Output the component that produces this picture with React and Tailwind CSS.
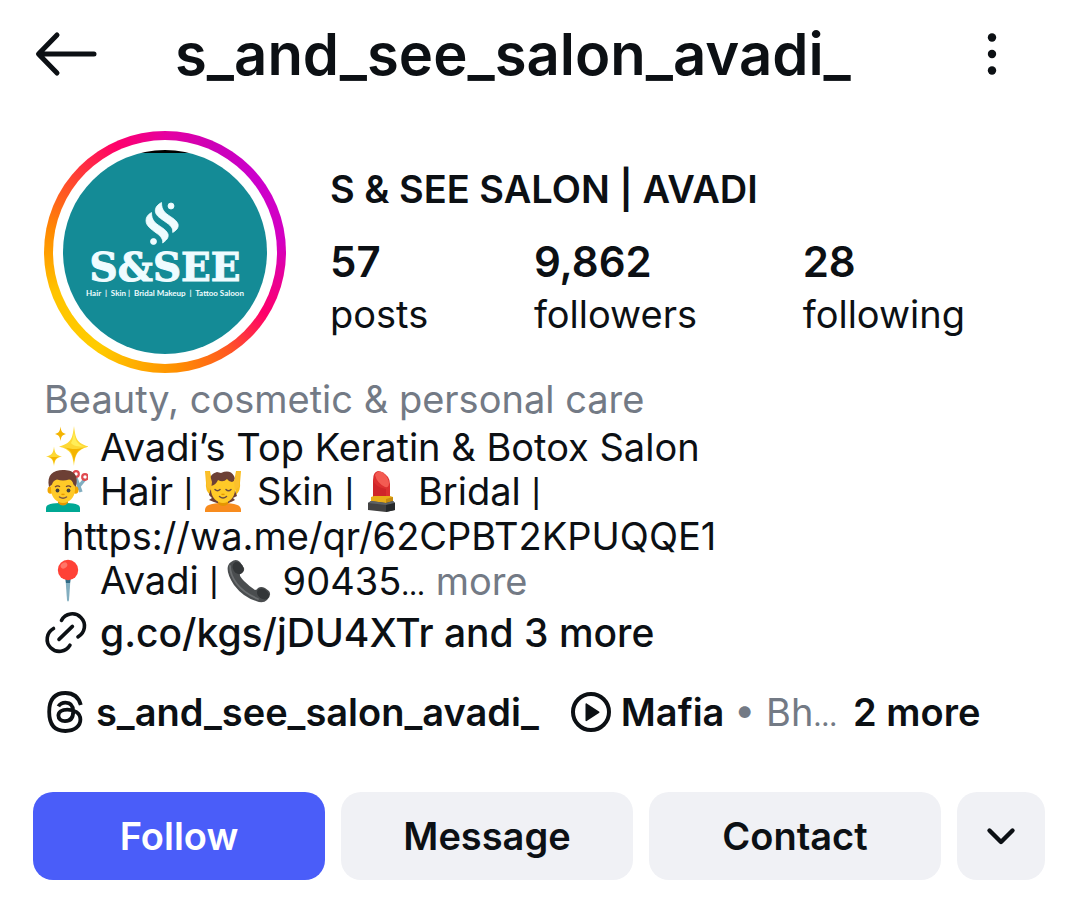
// src/App.jsx
import React from 'react';

const stats = [
    { value: '57', label: 'posts' },
    { value: '9,862', label: 'followers' },
    { value: '28', label: 'following' },
];

const BackIcon = () => (
    <svg className="w-16 h-12" viewBox="0 0 64 48" fill="none" stroke="currentColor" strokeWidth="5" strokeLinecap="round" strokeLinejoin="round" aria-hidden="true">
        <path d="M60 24H5M23 5L4.500 24L23 43" />
    </svg>
);

const DotsIcon = () => (
    <svg className="w-12 h-12" viewBox="0 0 48 48" fill="currentColor" aria-hidden="true">
        <circle cx="24" cy="7.500" r="4.200" />
        <circle cx="24" cy="24" r="4.200" />
        <circle cx="24" cy="40.500" r="4.200" />
    </svg>
);

const LinkIcon = () => (
    <svg className="w-11 h-11 shrink-0" viewBox="0 0 44 44" fill="none" stroke="currentColor" strokeWidth="3.600" strokeLinecap="round" aria-hidden="true">
        <path d="M17.500 9.300A12.200 12.200 0 1 1 34 25.800" />
        <path d="M26 34.200A12.200 12.200 0 1 1 9.500 17.500" />
        <path d="M15 28.400L28.400 15.400" />
    </svg>
);

const ThreadsIcon = () => (
    <svg className="w-10 h-11 shrink-0" viewBox="0 0 40 44" fill="none" stroke="currentColor" strokeWidth="3.800" strokeLinecap="butt" aria-hidden="true">
        <path d="M34.800 15C32.600 6.800 27.400 3 19.400 3C8.400 3 3.200 10 3.200 22C3.200 34 8.400 41 19.400 41C28.400 41 34.400 36.400 34.400 29.600C34.400 22.600 28 19.600 21.400 19.600C15.600 19.600 12.400 22 12.400 25.600C12.400 29 15 31.200 19 31.200C24.600 31.200 27.200 27.600 27.200 21.600C27.200 15.600 24.200 12.600 19.600 12.600C16.200 12.600 13.800 14 12.400 16.400" />
    </svg>
);

const PlayIcon = () => (
    <svg className="w-10 h-10 shrink-0" viewBox="0 0 40 40" aria-hidden="true">
        <circle cx="20" cy="20" r="18" fill="none" stroke="currentColor" strokeWidth="4" />
        <path d="M14.500 12v16.400c0 .6.6 1 1.200.6L28 20.900c.6-.4.6-1.100 0-1.500L15.700 11.400c-.6-.4-1.200 0-1.200.6z" fill="currentColor" />
    </svg>
);

const ChevronIcon = () => (
    <svg className="w-8 h-8" viewBox="0 0 32 32" fill="none" stroke="currentColor" strokeWidth="4.400" strokeLinecap="round" strokeLinejoin="round" aria-hidden="true">
        <path d="M4.500 10.500L16 22L27.500 10.500" />
    </svg>
);

const Emoji = ({ label, children }) => (
    <svg className="w-11 h-11 shrink-0" viewBox="0 0 44 44" role="img" aria-label={label}>
        {children}
    </svg>
);

const Sparkles = () => (
    <Emoji label="sparkles">
        <g fill="#fdd835">
            <path d="M30 1C31.500 14 33 18.500 45 21.500C33 25 31.500 29 30 41C28.500 29 27 25 15 21.500C27 18.500 28.500 14 30 1Z" />
            <path d="M10 21.500C10.800 28 12 30 18 31.500C12 33 10.800 35 10 41C9.200 35 8 33 2 31.500C8 30 9.200 28 10 21.500Z" />
            <path d="M16.500 1.500C17.200 6.500 18 8 22 9C18 10.200 17.200 11.500 16.500 16C15.800 11.500 15 10.200 11 9C15 8 15.800 6.500 16.500 1.500Z" fill="#f4b400" />
        </g>
        <path d="M30 5C31 16 33 19.500 41 21.500C34 21.500 29 21 27 18C29 15 29.500 10 30 5Z" fill="#ffee58" />
        <path d="M20 22.500C27 24.500 28.700 29 30 37C31.500 29 33 25.500 40 22.500C31 25 28 24 20 22.500Z" fill="#f4b400" />
        <path d="M10 32C8 32 6 32 4 31.500C8.500 32.800 9.400 35 10 39C10.600 35 11.500 33 16 31.500C13 32 12 32 10 32Z" fill="#f4b400" />
    </Emoji>
);

const Haircut = () => (
    <Emoji label="man getting haircut">
        <g fill="none" strokeWidth="2.200">
            <path d="M32 8L37 22M41 9L32 20" stroke="#82aec0" strokeWidth="3.400" />
            <circle cx="32" cy="4" r="2.800" stroke="#e04a4f" />
            <circle cx="41" cy="7" r="2.800" stroke="#e04a4f" />
        </g>
        <path d="M2 42V38C2 34 8 33 19 33S36 34 36 38V42Z" fill="#00a894" />
        <path d="M14 28H24V33Q19 38 14 33Z" fill="#e59600" />
        <ellipse cx="6.500" cy="20" rx="3" ry="3.800" fill="#f2a600" />
        <ellipse cx="31.500" cy="20" rx="3" ry="3.800" fill="#f2a600" />
        <path d="M7 15C7 6 12 3 19 3S31 6 31 15V20C31 27 25 33 19 33S7 27 7 20Z" fill="#ffca28" />
        <path d="M5 17C2.500 5 9 0 19 0S35 4 32 17L29.500 14.500Q28 9.500 25 9.500Q19 11.500 13 9.500Q9 10.500 8 14.500Z" fill="#6d4035" />
        <path d="M11 17Q13.500 15 16 16.700M22 16.700Q24.500 15 27 17" fill="none" stroke="#6d4035" strokeWidth="1.300" />
        <circle cx="13.500" cy="20.500" r="1.900" fill="#404040" />
        <circle cx="24.500" cy="20.500" r="1.900" fill="#404040" />
        <path d="M17.500 24Q19 25 20.500 24" fill="none" stroke="#e59600" strokeWidth="1.500" />
        <path d="M15.500 27Q19 29.500 22.500 27" fill="none" stroke="#795548" strokeWidth="1.500" strokeLinecap="round" />
    </Emoji>
);

const Massage = () => (
    <Emoji label="person getting massage">
        <path d="M4 1H9L11 12L9 25Q4 20 5 13ZM40 1H35L33 12L35 25Q40 20 39 13Z" fill="#f9bd1b" />
        <path d="M4 42V40C4 35 10 33 22 33S40 35 40 40V42Z" fill="#f88c1e" />
        <path d="M8 25L10 18H33L36 26L32 28L34 30Q27 34 22 34T8 30L11 28Z" fill="#6d4035" />
        <path d="M17 28H27V34Q22 38 17 34Z" fill="#e59600" />
        <path d="M10 14C10 7 15 5 22 5S34 8 34 15V20C34 27 28 33 22 33S10 27 10 20Z" fill="#ffca28" />
        <path d="M9 12Q8 4 16 2L20 3Q29-1 33 6Q35 10 31 12Q28 12 26 9Q22 13 17 10Q15 15 10 16Z" fill="#6d4035" />
        <path d="M5 1L8 2L11 12L10 20L6 17ZM39 1L36 2L33 12L34 20L38 17Z" fill="#fbc02d" />
        <path d="M14 19.500Q16.500 22 19 19.500M25 19.500Q27.500 22 30 19.500M18.500 26.500Q22 29.500 25.500 26.500" fill="none" stroke="#6d4c41" strokeWidth="1.500" strokeLinecap="round" />
        <path d="M20.500 24Q22 25 23.500 24" fill="none" stroke="#e59600" strokeWidth="1.400" />
    </Emoji>
);

const Lipstick = () => (
    <Emoji label="lipstick">
        <path d="M11 27V10Q11 2 16 1Q21 1 26 7Q28 10 28 14V29Z" fill="#dc2f2f" />
        <path d="M13 5Q15 0 20 2Q26 6 27 13Q27 18 23 17Q15 13 13 5Z" fill="#f35b52" />
        <path d="M11 10Q13 17 24 19V28H11Z" fill="#cf2529" />
        <path d="M9 27L12 26H28L31 27V33L25 35L9 34Z" fill="#e8ad18" />
        <path d="M24 29L31 27V34L24 35Z" fill="#c78c0e" />
        <path d="M6 33L9 31L24 33L31 31L33 33V40L24 42L6 40Z" fill="#424242" />
        <path d="M6 33L9 31L24 33L31 31L33 33L24 35Z" fill="#5d6266" />
        <path d="M24 35L33 33V40L24 42Z" fill="#26292b" />
    </Emoji>
);

const Pushpin = () => (
    <Emoji label="round pushpin">
        <path d="M21.500 20H26.500L25 41Q24 44 23 41Z" fill="#82aec0" />
        <path d="M21.500 20H26.500L26 24H22Z" fill="#2f6b86" />
        <circle cx="24" cy="11" r="10.200" fill="#ff4136" />
        <ellipse cx="20" cy="6.500" rx="3.600" ry="2.600" fill="#ff7568" transform="rotate(-35 20 6.500)" />
    </Emoji>
);

const Phone = () => (
    <Emoji label="telephone receiver">
        <path d="M4 3Q9-1 13 3L17 9Q18 13 13 15Q12 17 17 22T28 31Q30 31 31 29Q34 27 38 29L42 32Q45 36 40 41Q36 45 29 42Q16 38 7 26Q-1 14 1 7Q2 4 4 3Z" fill="#4a4d4f" />
        <path d="M3 7Q3 16 10 25T31 40" fill="none" stroke="#6a6d6f" strokeWidth="1.800" strokeLinecap="round" />
        <ellipse cx="11" cy="9" rx="5" ry="6.500" fill="#333638" transform="rotate(-32 11 9)" />
        <ellipse cx="36" cy="35" rx="6.500" ry="4.800" fill="#333638" transform="rotate(35 36 35)" />
    </Emoji>
);

const Bar = () => <span className="font-[Roboto,sans-serif]">|</span>;

const Ellipsis = () => <span className="text-[26px] leading-none font-medium">…</span>;

const Avatar = () => (
    <div className="size-[242px] shrink-0 rounded-full p-[9px] bg-[conic-gradient(#e600a0_0deg,#cc00b8_25deg,#cc00cc_50deg,#d400c0_85deg,#ff0069_122deg,#ff5a20_148deg,#ff9000_175deg,#ffcc00_215deg,#ffc400_250deg,#ff8a00_280deg,#ff4530_308deg,#ff0069_335deg,#e600a0_360deg)]">
        <div className="size-full rounded-full bg-white p-[10px]">
            <div className="size-full rounded-full overflow-hidden bg-[linear-gradient(#000_3px,#148b96_3px)] flex flex-col items-center pt-[51px] text-[#effcff]">
                <svg className="w-10 h-12 shrink-0" viewBox="3 1 40 48" fill="currentColor" stroke="currentColor" strokeWidth="0.800" aria-hidden="true">
                    <path d="M19.500 2.500C19.500 6 20 9 23 12.500C28 17 34 19 36 24C37 28 34 30.500 30.700 32.500C31 28 29 26 25 23C19 18.500 13.500 16 13.300 11C13.200 7 16 4.500 19.500 2.500Z" />
                    <path d="M9.500 12.500C9.500 16 10 19 13 22.500C18 27 24 29 26 34C27 38 24 40.500 20.700 43C21 39 19 36.500 15 33.500C9 29 4 26 4 20.500C4 17 6 14.500 9.500 12.500Z" />
                    <circle cx="29" cy="6" r="3" />
                    <circle cx="11.500" cy="41.500" r="3" />
                </svg>
                <p className="font-['DejaVu_Serif',serif] font-bold text-[39px] leading-9 [-webkit-text-stroke:1px]">S&amp;SEE</p>
                <p className="font-[Lato,sans-serif] font-bold text-[8px] leading-4 whitespace-pre">Hair  |  Skin |  Bridal Makeup  |  Tattoo Saloon</p>
            </div>
        </div>
    </div>
);

const ActionButton = ({ primary, children }) => (
    <button
        type="button"
        className={`h-[88px] flex-1 rounded-[20px] text-[38px] font-semibold ${primary ? 'bg-[#4a5df9] text-white' : 'bg-[#f0f1f5]'}`}
    >
        {children}
    </button>
);

const App = () => {
    return (
        <div className="bg-white text-[#0c1014] font-[Inter,sans-serif] text-[38px] leading-[44px] whitespace-nowrap pb-5">
            {/* Top bar */}
            <header className="flex items-center h-[108px] pl-[34px] pr-16">
                <button type="button" aria-label="Back"><BackIcon /></button>
                <h1 className="ml-[77px] flex-1 text-[58px] leading-[72px] font-semibold">s_and_see_salon_avadi_</h1>
                <button type="button" aria-label="Options"><DotsIcon /></button>
            </header>

            <main>
                {/* Avatar and stats */}
                <section className="flex items-start gap-11 pt-[23px] pl-11 pr-[115px]">
                    <Avatar />
                    <div className="flex-1 pt-9">
                        <h2 className="font-semibold">S &amp; SEE SALON | AVADI</h2>
                        <ul className="flex justify-between mt-[29px]">
                            {stats.map((stat) => (
                                <li key={stat.label}>
                                    <p className="text-[42px] font-semibold">{stat.value}</p>
                                    <p className="mt-2">{stat.label}</p>
                                </li>
                            ))}
                        </ul>
                    </div>
                </section>

                {/* Bio */}
                <section className="px-11 pt-1">
                    <p className="text-[#737a85]">Beauty, cosmetic &amp; personal care</p>
                    <div className="mt-1">
                        <p className="flex items-center gap-3"><Sparkles />Avadi’s Top Keratin &amp; Botox Salon</p>
                        <p className="flex items-center gap-2">
                            <Haircut /><span className="pl-1">Hair <Bar /></span>
                            <Massage /><span className="pl-1">Skin <Bar /></span>
                            <Lipstick /><span className="pl-1">Bridal <Bar /></span>
                        </p>
                        <p className="pl-[18px]">https://wa.me/qr/62CPBT2KPUQQE1</p>
                        <p className="flex items-center gap-2">
                            <Pushpin /><span className="pl-1">Avadi <Bar /></span>
                            <Phone /><span className="pl-1">90435<Ellipsis /> <button type="button" className="text-[#737a85]">more</button></span>
                        </p>
                    </div>
                    <a href="#links" className="flex items-center gap-3 mt-2 text-[39px] font-medium"><LinkIcon />g.co/kgs/jDU4XTr and 3 more</a>
                </section>

                {/* Threads and music */}
                <section className="flex items-center mt-[35px] px-[46px] font-semibold">
                    <a href="#threads" className="flex items-center gap-2.5"><ThreadsIcon />s_and_see_salon_avadi_</a>
                    <a href="#music" className="flex items-center gap-2.5 ml-8">
                        <PlayIcon />
                        <span>Mafia <span className="font-normal text-[#737a85]">• Bh<Ellipsis /></span></span>
                    </a>
                    <a href="#more" className="ml-4">2 more</a>
                </section>

                {/* Actions */}
                <section className="flex gap-4 mt-[58px] pl-[33px] pr-[35px]">
                    <ActionButton primary>Follow</ActionButton>
                    <ActionButton>Message</ActionButton>
                    <ActionButton>Contact</ActionButton>
                    <button type="button" aria-label="Similar accounts" className="size-[88px] rounded-[20px] bg-[#f0f1f5] flex items-center justify-center">
                        <ChevronIcon />
                    </button>
                </section>
            </main>
        </div>
    );
};

export default App;
